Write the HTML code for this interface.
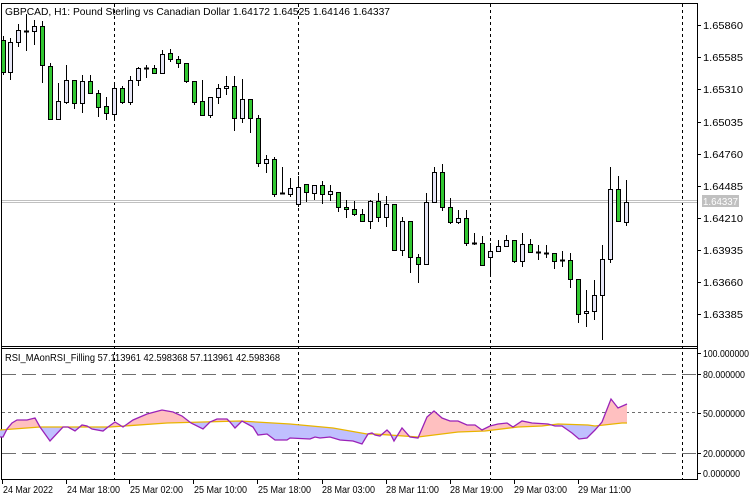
<!DOCTYPE html>
<html><head><meta charset="utf-8"><style>
html,body{margin:0;padding:0;background:#fff;width:750px;height:500px;overflow:hidden}
svg{display:block}
text{font-family:"Liberation Sans","DejaVu Sans",sans-serif;font-size:10.5px;fill:#000}
</style></head><body>
<svg id="s" width="750" height="500" viewBox="0 0 750 500" xmlns="http://www.w3.org/2000/svg" shape-rendering="crispEdges">
<defs>
<clipPath id="above"><polygon points="0,348 697,348 697,423 627,423 622,423 595,426 588,425 558,424 542,426 518,427 485,431 458,432 418,437 375,434 367,434 333,428 290,424 240,421 167,423 110,427 40,427 0,430"/></clipPath>
<clipPath id="below"><polygon points="0,479 697,479 697,423 627,423 622,423 595,426 588,425 558,424 542,426 518,427 485,431 458,432 418,437 375,434 367,434 333,428 290,424 240,421 167,423 110,427 40,427 0,430"/></clipPath>
</defs>
<line x1="1.5" y1="3" x2="1.5" y2="479" stroke="#000"/>
<line x1="1" y1="3.5" x2="697" y2="3.5" stroke="#000"/>
<line x1="697.5" y1="3" x2="697.5" y2="480" stroke="#000"/>
<line x1="1" y1="346.5" x2="697" y2="346.5" stroke="#000"/>
<line x1="1" y1="348.5" x2="697" y2="348.5" stroke="#000"/>
<line x1="1" y1="479.5" x2="698" y2="479.5" stroke="#000"/>
<g stroke="#000" stroke-dasharray="3,3">
<line x1="114.5" y1="4" x2="114.5" y2="479"/>
<line x1="298.5" y1="4" x2="298.5" y2="479"/>
<line x1="490.5" y1="4" x2="490.5" y2="479"/>
<line x1="682.5" y1="4" x2="682.5" y2="479"/>
</g>
<line x1="2" y1="200.5" x2="697" y2="200.5" stroke="#c0c0c0"/>
<line x1="2" y1="202.5" x2="697" y2="202.5" stroke="#c0c0c0"/>
<g id="candles"></g>
<g stroke="#000">
<line x1="697" y1="25.5" x2="701" y2="25.5"/><line x1="697" y1="57.5" x2="701" y2="57.5"/>
<line x1="697" y1="89.5" x2="701" y2="89.5"/><line x1="697" y1="122.5" x2="701" y2="122.5"/>
<line x1="697" y1="154.5" x2="701" y2="154.5"/><line x1="697" y1="186.5" x2="701" y2="186.5"/>
<line x1="697" y1="218.5" x2="701" y2="218.5"/><line x1="697" y1="250.5" x2="701" y2="250.5"/>
<line x1="697" y1="282.5" x2="701" y2="282.5"/><line x1="697" y1="314.5" x2="701" y2="314.5"/>
<line x1="697" y1="353.5" x2="701" y2="353.5"/><line x1="697" y1="374.5" x2="701" y2="374.5"/>
<line x1="697" y1="413.5" x2="701" y2="413.5"/><line x1="697" y1="453.5" x2="701" y2="453.5"/>
<line x1="697" y1="473.5" x2="701" y2="473.5"/>
</g>
<g lengthAdjust="spacingAndGlyphs">
<text x="703" y="29" textLength="40" lengthAdjust="spacingAndGlyphs">1.65860</text><text x="703" y="61" textLength="40" lengthAdjust="spacingAndGlyphs">1.65585</text>
<text x="703" y="93" textLength="40" lengthAdjust="spacingAndGlyphs">1.65310</text><text x="703" y="126" textLength="40" lengthAdjust="spacingAndGlyphs">1.65035</text>
<text x="703" y="158" textLength="40" lengthAdjust="spacingAndGlyphs">1.64760</text><text x="703" y="190" textLength="40" lengthAdjust="spacingAndGlyphs">1.64485</text>
<text x="703" y="222" textLength="40" lengthAdjust="spacingAndGlyphs">1.64210</text><text x="703" y="254" textLength="40" lengthAdjust="spacingAndGlyphs">1.63935</text>
<text x="703" y="286" textLength="40" lengthAdjust="spacingAndGlyphs">1.63660</text><text x="703" y="318" textLength="40" lengthAdjust="spacingAndGlyphs">1.63385</text>
</g>
<rect x="702" y="195" width="37" height="12" fill="#c0c0c0"/>
<text x="703" y="205" style="fill:#fff" textLength="35" lengthAdjust="spacingAndGlyphs">1.64337</text>
<g stroke="#6e6e6e" stroke-dasharray="14,6">
<line x1="2" y1="374.5" x2="697" y2="374.5"/>
<line x1="2" y1="453.5" x2="697" y2="453.5"/>
</g>
<line x1="2" y1="412.5" x2="697" y2="412.5" stroke="#6e6e6e" stroke-dasharray="3,3"/>
<g shape-rendering="auto">
<polygon id="fillA" clip-path="url(#above)" fill="#ffc0c0"/>
<polygon id="fillB" clip-path="url(#below)" fill="#c0c0ff"/>
<polyline id="ma" fill="none" stroke="#e8b400" stroke-width="1.3" points="0,430 40,427 110,427 167,423 240,421 290,424 333,428 367,434 375,434 418,437 458,432 485,431 518,427 542,426 558,424 588,425 595,426 622,423 627,423"/>
<polyline id="rsi" fill="none" stroke="#9a22b8" stroke-width="1.3"/>
</g>
<text x="5" y="361" textLength="275" lengthAdjust="spacingAndGlyphs">RSI_MAonRSI_Filling 57.113961 42.598368 57.113961 42.598368</text>
<text x="703" y="357" textLength="46" lengthAdjust="spacingAndGlyphs">100.000000</text>
<text x="703" y="378" textLength="42" lengthAdjust="spacingAndGlyphs">80.000000</text>
<text x="703" y="417" textLength="42" lengthAdjust="spacingAndGlyphs">50.000000</text>
<text x="703" y="457" textLength="42" lengthAdjust="spacingAndGlyphs">20.000000</text>
<text x="703" y="477" textLength="37" lengthAdjust="spacingAndGlyphs">0.000000</text>
<g stroke="#000">
<line x1="2.5" y1="479" x2="2.5" y2="484"/><line x1="66.5" y1="479" x2="66.5" y2="484"/>
<line x1="129.5" y1="479" x2="129.5" y2="484"/><line x1="193.5" y1="479" x2="193.5" y2="484"/>
<line x1="257.5" y1="479" x2="257.5" y2="484"/><line x1="322.5" y1="479" x2="322.5" y2="484"/>
<line x1="386.5" y1="479" x2="386.5" y2="484"/><line x1="450.5" y1="479" x2="450.5" y2="484"/>
<line x1="514.5" y1="479" x2="514.5" y2="484"/><line x1="578.5" y1="479" x2="578.5" y2="484"/>
</g>
<text x="3" y="493" textLength="50" lengthAdjust="spacingAndGlyphs">24 Mar 2022</text>
<text x="67" y="493" textLength="53" lengthAdjust="spacingAndGlyphs">24 Mar 18:00</text>
<text x="130" y="493" textLength="53" lengthAdjust="spacingAndGlyphs">25 Mar 02:00</text>
<text x="194" y="493" textLength="53" lengthAdjust="spacingAndGlyphs">25 Mar 10:00</text>
<text x="258" y="493" textLength="53" lengthAdjust="spacingAndGlyphs">25 Mar 18:00</text>
<text x="322" y="493" textLength="53" lengthAdjust="spacingAndGlyphs">28 Mar 03:00</text>
<text x="386" y="493" textLength="53" lengthAdjust="spacingAndGlyphs">28 Mar 11:00</text>
<text x="450" y="493" textLength="53" lengthAdjust="spacingAndGlyphs">28 Mar 19:00</text>
<text x="514" y="493" textLength="53" lengthAdjust="spacingAndGlyphs">29 Mar 03:00</text>
<text x="578" y="493" textLength="53" lengthAdjust="spacingAndGlyphs">29 Mar 11:00</text>
<text x="5" y="15" textLength="385" lengthAdjust="spacingAndGlyphs">GBPCAD, H1:  Pound Sterling vs Canadian Dollar  1.64172 1.64525 1.64146 1.64337</text>
</svg>
<script>
var C=[
[3,36,75,40,72,1],[10,38,80,42,72,0],[18,24,47,30,42,0],[26,14,51,31,31,2],[34,20,45,26,31,0],
[42,21,83,26,65,1],[50,63,119,66,119,1],[58,83,119,101,119,0],[66,65,104,80,102,0],[74,80,109,80,103,1],
[82,75,113,81,103,0],[90,75,93,81,93,1],[98,90,117,93,107,1],[106,97,120,106,113,1],[114,85,120,88,114,0],
[122,86,104,88,102,1],[130,76,105,80,102,0],[138,67,86,68,80,0],[146,65,78,68,68,2],[154,65,74,68,73,1],
[162,50,73,54,73,0],[170,49,62,53,59,1],[178,56,68,59,63,1],[186,63,83,63,81,1],[194,81,105,81,102,1],
[202,80,115,101,115,1],[210,97,118,97,115,0],[218,84,104,88,97,0],[226,76,95,86,88,0],[234,76,131,86,118,1],
[242,79,123,99,118,0],[250,99,133,99,118,1],[258,115,167,118,163,1],[266,155,173,159,163,0],[274,157,197,159,194,1],
[282,167,194,193,193,2],[290,178,197,188,194,0],[298,176,207,187,204,0],[306,184,202,184,192,1],[314,185,200,185,193,0],
[322,181,204,185,194,1],[330,185,201,191,194,0],[338,192,212,192,207,1],[346,200,218,207,209,1],[354,201,216,209,214,1],
[362,209,222,214,221,1],[370,200,229,201,221,0],[378,193,222,201,217,1],[386,196,227,204,217,0],[394,204,250,204,250,1],
[402,217,256,221,250,0],[410,221,273,221,257,1],[418,254,283,257,264,1],[426,193,264,202,264,0],[434,167,203,172,202,0],
[442,164,211,172,207,1],[450,198,224,207,222,1],[458,210,224,218,222,0],[466,210,246,218,243,1],[474,233,245,243,243,2],
[482,236,265,243,265,1],[490,243,274,251,257,0],[498,240,252,246,251,0],[506,235,247,240,246,0],[514,240,263,240,261,1],
[522,233,267,244,261,0],[530,239,253,244,252,1],[538,245,260,252,252,2],[546,245,258,253,253,2],[554,253,269,253,261,1],
[562,251,267,260,260,2],[570,253,288,260,279,1],[578,279,323,279,314,1],[586,290,327,311,313,0],[594,280,320,295,311,0],
[602,245,340,259,295,0],[610,167,263,189,259,0],[618,176,221,189,221,1],[626,180,226,202,222,0]];
var g=document.getElementById('candles'),h='';
C.forEach(function(c){var x=c[0];
h+='<line x1="'+(x+.5)+'" y1="'+c[1]+'" x2="'+(x+.5)+'" y2="'+c[2]+'" stroke="#000"/>';
if(c[5]==2){h+='<line x1="'+(x-2)+'" y1="'+(c[3]+.5)+'" x2="'+(x+3)+'" y2="'+(c[3]+.5)+'" stroke="#000" stroke-width="2"/>';}
else{var hh=Math.max(c[4]-c[3],2);h+='<rect x="'+(x-1.5)+'" y="'+(c[3]+.5)+'" width="4" height="'+hh+'" fill="'+(c[5]?'#32c832':'#e6e6f6')+'" stroke="#000"/>';}
});
g.innerHTML=h;
var R="0,437 3,437 7,429 12,423 17,420 27,420 35,418 40,427 50,441 63,427 68,427 75,431 82,425 87,426 92,429 103,431 108,427 115,422 123,427 133,420 147,414 162,410 173,412 182,416 191,423 203,429 210,422 217,419 227,419 230,422 235,428 242,421 253,427 258,435 267,434 275,440 287,440 290,438 310,439 315,437 320,438 330,437 340,440 353,441 362,444 368,434 372,433 375,435 380,436 387,430 390,433 394,441 402,428 410,437 418,438 427,417 434,411 442,418 450,421 458,421 467,425 475,425 482,430 490,426 498,424 507,423 513,427 522,421 532,423 548,424 555,426 562,426 572,433 579,439 587,438 595,430 602,422 611,399 618,408 627,404";
document.getElementById('rsi').setAttribute('points',R);
var M="627,423 622,423 595,426 588,425 558,424 542,426 518,427 485,431 458,432 418,437 375,434 367,434 333,428 290,424 240,421 167,423 110,427 40,427 0,430";
document.getElementById('fillA').setAttribute('points',R+' '+M);
document.getElementById('fillB').setAttribute('points',R+' '+M);
</script>
</body></html>
